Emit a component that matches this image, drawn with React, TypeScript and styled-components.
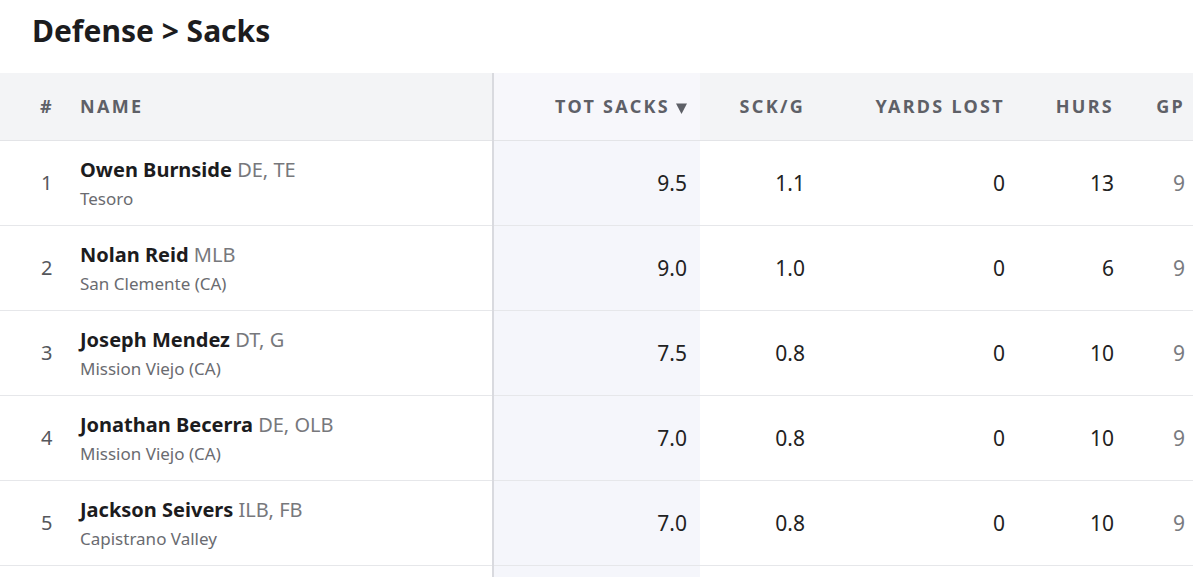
import React from 'react';
import styled, { createGlobalStyle } from 'styled-components';

const GlobalStyle = createGlobalStyle`
  body {
    margin: 0;
    background: #fff;
    font-family: "Noto Sans", "Open Sans", Arial, sans-serif;
    color: #222;
  }
`;

type Player = {
  rank: number;
  name: string;
  pos: string;
  school: string;
  sacks: string;
  perGame: string;
  yards: number;
  hurries: number;
  gp: number;
};

const players: Player[] = [
  { rank: 1, name: 'Owen Burnside', pos: 'DE, TE', school: 'Tesoro', sacks: '9.5', perGame: '1.1', yards: 0, hurries: 13, gp: 9 },
  { rank: 2, name: 'Nolan Reid', pos: 'MLB', school: 'San Clemente (CA)', sacks: '9.0', perGame: '1.0', yards: 0, hurries: 6, gp: 9 },
  { rank: 3, name: 'Joseph Mendez', pos: 'DT, G', school: 'Mission Viejo (CA)', sacks: '7.5', perGame: '0.8', yards: 0, hurries: 10, gp: 9 },
  { rank: 4, name: 'Jonathan Becerra', pos: 'DE, OLB', school: 'Mission Viejo (CA)', sacks: '7.0', perGame: '0.8', yards: 0, hurries: 10, gp: 9 },
  { rank: 5, name: 'Jackson Seivers', pos: 'ILB, FB', school: 'Capistrano Valley', sacks: '7.0', perGame: '0.8', yards: 0, hurries: 10, gp: 9 },
  { rank: 6, name: '', pos: '', school: '', sacks: '', perGame: '', yards: 0, hurries: 0, gp: 0 },
];

const Page = styled.div`
  width: 1200px;
  height: 577px;
  overflow: hidden;
`;

const Title = styled.h1`
  margin: 0;
  height: 73px;
  padding: 10px 0 0 32px;
  box-sizing: border-box;
  font-size: 30px;
  font-weight: 700;
  color: #1c1c1e;
`;

const Table = styled.table`
  width: 1193px;
  table-layout: fixed;
  border-collapse: collapse;
  border-spacing: 0;
`;

const HeadRow = styled.tr`
  height: 67px;
  background: #f3f4f6;
  border-bottom: 1px solid #e3e4e7;
`;

const Row = styled.tr`
  height: 85px;
  border-bottom: 1px solid #e6e7ea;
`;

const HeadCell = styled.th<{ $sorted?: boolean; $align?: 'left' | 'right'; $pad?: number; $divider?: boolean }>`
  padding: 0 ${p => p.$pad ?? 13}px 0 0;
  text-align: ${p => p.$align ?? 'right'};
  font-size: 18px;
  font-weight: 700;
  letter-spacing: 2.3px;
  color: #5e6067;
  background: ${p => (p.$sorted ? '#f7f7fb' : 'transparent')};
  border-right: ${p => (p.$divider ? '2px solid #d9dadf' : 'none')};
  white-space: nowrap;
`;

const Cell = styled.td<{ $sorted?: boolean; $pad?: number; $faded?: boolean }>`
  padding: 0 ${p => p.$pad ?? 13}px 0 0;
  text-align: right;
  font-size: 21px;
  color: ${p => (p.$faded ? '#7a7b80' : '#222')};
  background: ${p => (p.$sorted ? '#f5f6fb' : 'transparent')};
`;

const RankCell = styled.td`
  padding: 0 0 0 41px;
  font-size: 20px;
  color: #55575c;
`;

const RankHead = styled.th`
  padding: 0 0 0 40px;
  text-align: left;
  font-size: 18px;
  font-weight: 700;
  color: #5e6067;
`;

const NameCell = styled.td`
  border-right: 2px solid #d9dadf;
  padding: 2px 0 0;
`;

const NameLine = styled.div`
  font-size: 20px;
  line-height: 28px;
  color: #77787c;
  white-space: nowrap;
`;

const PlayerName = styled.span`
  font-weight: 700;
  color: #1c1c1e;
`;

const School = styled.div`
  font-size: 17px;
  line-height: 24px;
  margin-top: 3px;
  color: #6a6b70;
`;

const SortArrow = styled.svg`
  width: 11px;
  height: 11px;
  margin-left: 6px;
  vertical-align: -1px;
  fill: #5e6067;
`;

const App = () => (
  <Page>
    <GlobalStyle />
    <Title>Defense &gt; Sacks</Title>
    <Table>
      <colgroup>
        <col style={{ width: 80 }} />
        <col style={{ width: 413 }} />
        <col style={{ width: 207 }} />
        <col style={{ width: 118 }} />
        <col style={{ width: 200 }} />
        <col style={{ width: 109 }} />
        <col style={{ width: 66 }} />
      </colgroup>
      <thead>
        <HeadRow>
          <RankHead>#</RankHead>
          <HeadCell $align="left" $divider>NAME</HeadCell>
          <HeadCell $sorted>
            TOT SACKS
            <SortArrow viewBox="0 0 11 11">
              <path d="M0 0.5 H11 L5.5 11 Z" />
            </SortArrow>
          </HeadCell>
          <HeadCell>SCK/G</HeadCell>
          <HeadCell>YARDS LOST</HeadCell>
          <HeadCell>HURS</HeadCell>
          <HeadCell $pad={8}>GP</HeadCell>
        </HeadRow>
      </thead>
      <tbody>
        {players.map(p =>
          p.name ? (
            <Row key={p.rank}>
              <RankCell>{p.rank}</RankCell>
              <NameCell>
                <NameLine>
                  <PlayerName>{p.name}</PlayerName> {p.pos}
                </NameLine>
                <School>{p.school}</School>
              </NameCell>
              <Cell $sorted>{p.sacks}</Cell>
              <Cell>{p.perGame}</Cell>
              <Cell>{p.yards}</Cell>
              <Cell>{p.hurries}</Cell>
              <Cell $pad={8} $faded>{p.gp}</Cell>
            </Row>
          ) : (
            <Row key={p.rank}>
              <RankCell />
              <NameCell />
              <Cell $sorted />
              <Cell />
              <Cell />
              <Cell />
              <Cell />
            </Row>
          )
        )}
      </tbody>
    </Table>
  </Page>
);

export default App;
